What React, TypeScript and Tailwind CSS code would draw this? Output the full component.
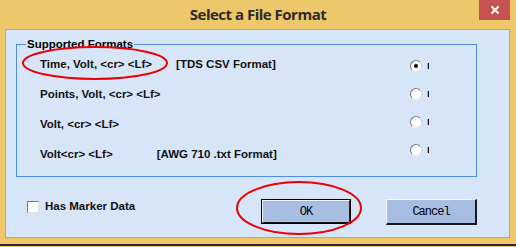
import React from 'react'

const ROWS = [
  { label: 'Time, Volt, <cr> <Lf>', note: '[TDS CSV Format]', noteX: 'ml-[24px]', checked: true },
  { label: 'Points, Volt, <cr> <Lf>', note: '', noteX: '', checked: false },
  { label: 'Volt, <cr> <Lf>', note: '', noteX: '', checked: false },
  { label: 'Volt<cr> <Lf>', note: '[AWG 710 .txt Format]', noteX: 'ml-[44px]', checked: false },
]

function Radio({ checked }: { checked: boolean }) {
  return (
    <div className="flex h-[28px] items-start">
      <span className="relative h-[12px] w-[12px] rounded-full border border-t-[#7a7a7a] border-l-[#7a7a7a] border-r-[#dcdcdc] border-b-[#e8e8e8] bg-white flex items-center justify-center">
        {checked && <span className="h-[4px] w-[4px] rounded-full bg-black" />}
      </span>
      {/* tiny caption stub next to each radio */}
      <span className="ml-[5px] mt-[3px] flex h-[6px]">
        <span className="w-px bg-[#e8a040]" />
        <span className="w-px bg-[#1a1a1a]" />
      </span>
    </div>
  )
}

function Btn({ children, isDefault }: { children: React.ReactNode; isDefault?: boolean }) {
  return (
    <div className={isDefault ? 'border border-black' : ''}>
      <button
        className={`flex items-center justify-center bg-[#a8bde2] border border-t-[#f2f6fc] border-l-[#f2f6fc] border-r-[#1a1a1a] border-b-[#1a1a1a] text-[12px] tracking-[-1px] text-black font-['Liberation_Mono',monospace] ${isDefault ? 'h-[23px] w-[88px]' : 'h-[26px] w-[91px] border-r-2 border-b-2'}`}
      >
        {children}
      </button>
    </div>
  )
}

export default function App() {
  return (
    <div className="relative h-[247px] w-[516px] overflow-hidden bg-[#efc76b] font-['Liberation_Sans',Arial,sans-serif]">
      {/* title bar */}
      <div className="relative flex h-[29px] items-center justify-center">
        <span className="text-[15px] font-bold text-[#2b2b2b] font-['Open_Sans',sans-serif] tracking-[-0.5px]">Select a File Format</span>
        <div className="absolute right-[6px] top-0 flex h-[20px] w-[31px] items-center justify-center bg-[#c75252]">
          <svg width="10" height="10" viewBox="0 0 10 10">
            <path d="M1.5 1.5 L8.5 8.5 M8.5 1.5 L1.5 8.5" stroke="white" strokeWidth="2" />
          </svg>
        </div>
      </div>

      {/* client area */}
      <div className="ml-[5px] h-[209px] w-[505px] border border-[#c9a659] bg-[#d7e5f9]">
        {/* group box */}
        <div className="relative ml-[10px] mt-[14px] flex h-[133px] w-[461px] border border-[#4d8ce9]">
          <span className="absolute left-[9px] top-[-8px] bg-[#d7e5f9] px-px text-[11.5px] font-bold leading-[14px] text-black">
            Supported Formats
          </span>
          <div className="mt-[5px] flex flex-1 flex-col pl-[23px]">
            {ROWS.map((r, i) => (
              <div key={i} className="flex h-[30px] items-center whitespace-nowrap text-[11.5px] font-bold text-[#111]">
                <span>{r.label}</span>
                {r.note && <span className={r.noteX}>{r.note}</span>}
              </div>
            ))}
          </div>
          <div className="mr-[47px] mt-[15px] flex flex-col">
            {ROWS.map((r, i) => (
              <Radio key={i} checked={r.checked} />
            ))}
          </div>
        </div>

        {/* bottom row */}
        <div className="mt-[22px] flex items-start">
          <div className="ml-[21px] mt-[-1px] flex w-[234px] shrink-0 items-center">
            <span className="h-[12px] w-[12px] shrink-0 border border-t-[#7a7a7a] border-l-[#7a7a7a] border-r-[#e0e0e0] border-b-[#e0e0e0] bg-white" />
            <span className="ml-[6px] whitespace-nowrap text-[11.5px] font-bold text-[#111]">Has Marker Data</span>
          </div>
          <div className="shrink-0">
            <Btn isDefault>OK</Btn>
          </div>
          <div className="ml-[35px] shrink-0">
            <Btn>Cancel</Btn>
          </div>
        </div>
      </div>

      {/* bottom edge strip */}
      <div className="mt-[6px] h-[2px] w-full bg-[#2a2a2a]" />

      {/* red annotation ellipses */}
      <svg className="pointer-events-none absolute left-0 top-0" width="516" height="247">
        <ellipse cx="95" cy="63" rx="72" ry="16" fill="none" stroke="#ee0000" strokeWidth="2" />
        <ellipse cx="299" cy="208" rx="62" ry="26" fill="none" stroke="#ee0000" strokeWidth="2" />
      </svg>
    </div>
  )
}
